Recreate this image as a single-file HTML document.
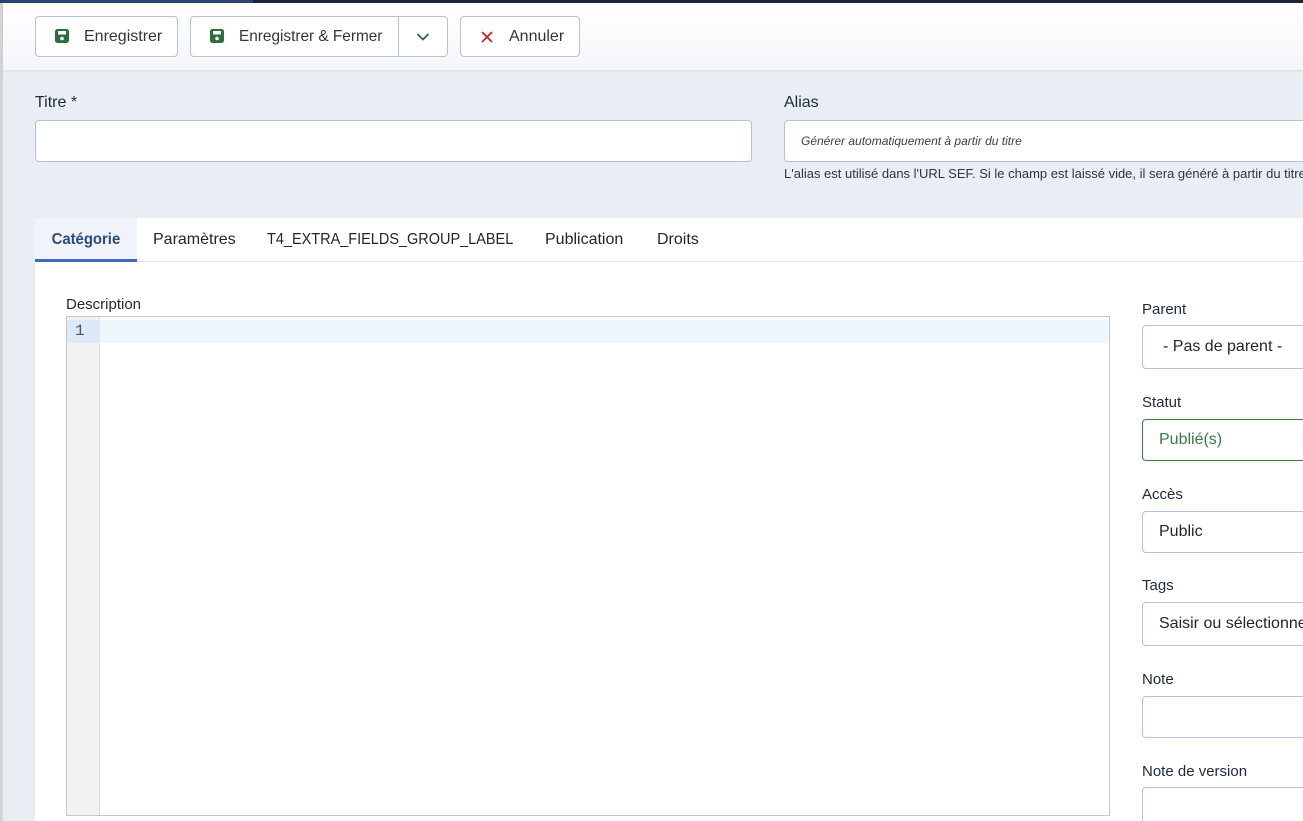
<!DOCTYPE html>
<html><head><meta charset="utf-8"><style>
*{box-sizing:border-box;margin:0;padding:0}
html,body{width:1303px;height:821px;overflow:hidden}
body{background:#e9eef5;font-family:"Liberation Sans",sans-serif;color:#22262a;position:relative}
.a{position:absolute}
.btn{position:absolute;top:16px;height:41px;border:1px solid #b7c3d4;border-radius:4px;background:#fff;font-size:16px;color:#30353b;display:flex;align-items:center}
.lbl{position:absolute;font-size:16px;color:#1d2a3d}
.in{position:absolute;background:#fff;border:1px solid #b3c2dc;border-radius:4px;font-size:16px;display:flex;align-items:center;padding-left:16px}
.tab{position:absolute;top:218px;height:44px;font-size:16px;color:#22262a;display:flex;align-items:center;white-space:nowrap}
</style></head><body>
<div class="a" style="left:0;top:0;width:3px;height:821px;background:#d4d4d4"></div>
<div class="a" style="left:0;top:0;width:1303px;height:3px;background:#1b2539"></div>
<div class="a" style="left:0;top:0;width:253px;height:3px;background:#2c4470"></div>
<div class="a" style="left:3px;top:3px;width:1300px;height:67px;background:linear-gradient(#fff,#f4f6f9);box-shadow:0 1px 3px rgba(0,0,0,.08)"></div>

<div class="btn" style="left:35px;width:143px"><svg class="a" style="left:19px;top:12px" width="14" height="14" viewBox="0 0 14 14"><rect width="14" height="14" rx="2.5" fill="#2f6d3d"/><rect x="3" y="2" width="8" height="3.5" fill="#fff"/><circle cx="7" cy="9.5" r="1.8" fill="#fff"/></svg><span class="a" style="left:48px;top:11px">Enregistrer</span></div>
<div class="btn" style="left:190px;width:258px"><svg class="a" style="left:19px;top:12px" width="14" height="14" viewBox="0 0 14 14"><rect width="14" height="14" rx="2.5" fill="#2f6d3d"/><rect x="3" y="2" width="8" height="3.5" fill="#fff"/><circle cx="7" cy="9.5" r="1.8" fill="#fff"/></svg><span class="a" style="left:48px;top:11px;display:inline-block;transform:scaleX(0.96);transform-origin:left">Enregistrer &amp; Fermer</span><div class="a" style="left:207px;top:0;width:1px;height:39px;background:#b7c3d4"></div><svg class="a" style="left:225px;top:15px" width="14" height="10" viewBox="0 0 14 10"><path d="M1.5 2 L7 7.5 L12.5 2" fill="none" stroke="#2f6d3d" stroke-width="1.8"/></svg></div>
<div class="btn" style="left:460px;width:120px"><svg class="a" style="left:20px;top:14px" width="12" height="12" viewBox="0 0 12 12"><path d="M1 1L11 11M11 1L1 11" stroke="#c52827" stroke-width="1.8"/></svg><span class="a" style="left:48px;top:11px">Annuler</span></div>

<div class="lbl" style="left:35px;top:94px">Titre *</div>
<div class="in" style="left:35px;top:120px;width:717px;height:42px"></div>
<div class="lbl" style="left:784px;top:94px">Alias</div>
<div class="in" style="left:784px;top:120px;width:530px;height:42px;font-size:12px;font-style:italic;color:#3a3f45">Générer automatiquement à partir du titre</div>
<div class="a" style="left:784px;top:166px;font-size:13px;color:#30353b;white-space:nowrap">L'alias est utilisé dans l'URL SEF. Si le champ est laissé vide, il sera généré à partir du titre.</div>

<div class="a" style="left:35px;top:218px;width:1268px;height:603px;background:#fff"></div>
<div class="a" style="left:35px;top:261px;width:1268px;height:1px;background:#dfe3e8"></div>
<div class="tab" style="left:35px;width:102px;background:#f0f4fa;font-weight:bold;color:#2a4a7c;justify-content:center;border-bottom:3px solid #3f6ac4;padding-top:3px"><span style="display:inline-block;transform:scaleX(0.93)">Catégorie</span></div>
<div class="tab" style="left:153px">Paramètres</div>
<div class="tab" style="left:267px"><span style="display:inline-block;transform:scaleX(0.905);transform-origin:left">T4_EXTRA_FIELDS_GROUP_LABEL</span></div>
<div class="tab" style="left:545px">Publication</div>
<div class="tab" style="left:657px">Droits</div>

<div class="lbl" style="left:66px;top:296px;font-size:15px">Description</div>
<div class="a" style="left:66px;top:316px;width:1044px;height:500px;border:1px solid #c8c8c8;background:#fff"></div>
<div class="a" style="left:67px;top:317px;width:33px;height:498px;background:#f2f2f2;border-right:1px solid #ddd"></div>
<div class="a" style="left:67px;top:320px;width:33px;height:23px;background:#dde9f7"></div>
<div class="a" style="left:100px;top:320px;width:1009px;height:23px;background:#eff6fd"></div>
<div class="a" style="left:75px;top:322px;font-family:'Liberation Mono',monospace;font-size:16px;color:#555">1</div>

<div class="lbl" style="left:1142px;top:301px;font-size:15px">Parent</div>
<div class="in" style="left:1142px;top:325px;width:170px;height:44px;padding-left:20px">- Pas de parent -</div>
<div class="lbl" style="left:1142px;top:394px;font-size:15px">Statut</div>
<div class="in" style="left:1142px;top:419px;width:170px;height:42px;border-color:#3a7a43;color:#3a7a43">Publié(s)</div>
<div class="lbl" style="left:1142px;top:486px;font-size:15px">Accès</div>
<div class="in" style="left:1142px;top:511px;width:170px;height:42px">Public</div>
<div class="lbl" style="left:1142px;top:577px;font-size:15px">Tags</div>
<div class="in" style="left:1142px;top:602px;width:170px;height:44px;white-space:nowrap;overflow:hidden">Saisir ou sélectionner</div>
<div class="lbl" style="left:1142px;top:671px;font-size:15px">Note</div>
<div class="in" style="left:1142px;top:696px;width:170px;height:42px"></div>
<div class="lbl" style="left:1142px;top:763px;font-size:15px">Note de version</div>
<div class="in" style="left:1142px;top:787px;width:170px;height:44px"></div>
</body></html>
